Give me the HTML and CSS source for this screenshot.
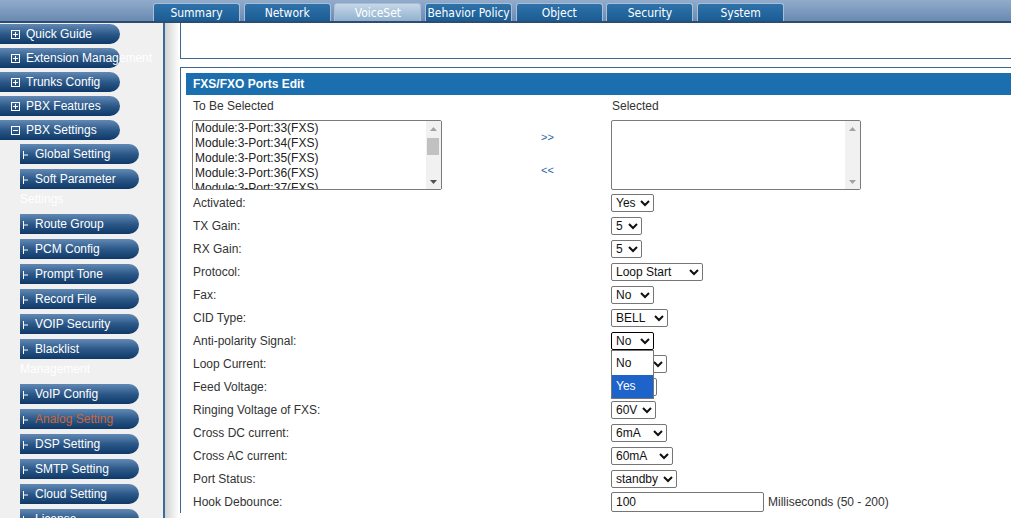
FILE: index.html
```html
<!DOCTYPE html>
<html lang="en">
<head>
    <meta charset="UTF-8">
    <meta name="viewport" content="width=device-width, initial-scale=1.0">
    <title>FXS/FXO Ports Edit</title>
    <link rel="stylesheet" href="styles.css">
</head>
<body>
    <div class="topbar">
        <ul class="tabs">
            <li class="tab">Summary</li>
            <li class="tab">Network</li>
            <li class="tab active">VoiceSet</li>
            <li class="tab">Behavior Policy</li>
            <li class="tab">Object</li>
            <li class="tab">Security</li>
            <li class="tab">System</li>
        </ul>
    </div>

    <div class="page">
        <div class="sidebar">
            <ul class="menu">
                <li class="menu-item">
                    <a class="menu-link"><svg class="box-icon" viewBox="0 0 9 9"><rect x="0.5" y="0.5" width="8" height="8" fill="none" stroke="#fff"/><path d="M2 4.5H7M4.5 2V7" stroke="#fff"/></svg>Quick Guide</a>
                </li>
                <li class="menu-item">
                    <a class="menu-link"><svg class="box-icon" viewBox="0 0 9 9"><rect x="0.5" y="0.5" width="8" height="8" fill="none" stroke="#fff"/><path d="M2 4.5H7M4.5 2V7" stroke="#fff"/></svg>Extension Management</a>
                </li>
                <li class="menu-item">
                    <a class="menu-link"><svg class="box-icon" viewBox="0 0 9 9"><rect x="0.5" y="0.5" width="8" height="8" fill="none" stroke="#fff"/><path d="M2 4.5H7M4.5 2V7" stroke="#fff"/></svg>Trunks Config</a>
                </li>
                <li class="menu-item">
                    <a class="menu-link"><svg class="box-icon" viewBox="0 0 9 9"><rect x="0.5" y="0.5" width="8" height="8" fill="none" stroke="#fff"/><path d="M2 4.5H7M4.5 2V7" stroke="#fff"/></svg>PBX Features</a>
                </li>
                <li class="menu-item">
                    <a class="menu-link"><svg class="box-icon" viewBox="0 0 9 9"><rect x="0.5" y="0.5" width="8" height="8" fill="none" stroke="#fff"/><path d="M2 4.5H7" stroke="#fff"/></svg>PBX Settings</a>
                    <ul class="submenu">
                        <li><a class="sub-link"><svg class="branch" viewBox="0 0 15 8"><path d="M3.5 0V8M3.5 4H8" stroke="#fff"/></svg>Global Setting</a></li>
                        <li><a class="sub-link"><svg class="branch" viewBox="0 0 15 8"><path d="M3.5 0V8M3.5 4H8" stroke="#fff"/></svg>Soft Parameter Settings</a></li>
                        <li><a class="sub-link"><svg class="branch" viewBox="0 0 15 8"><path d="M3.5 0V8M3.5 4H8" stroke="#fff"/></svg>Route Group</a></li>
                        <li><a class="sub-link"><svg class="branch" viewBox="0 0 15 8"><path d="M3.5 0V8M3.5 4H8" stroke="#fff"/></svg>PCM Config</a></li>
                        <li><a class="sub-link"><svg class="branch" viewBox="0 0 15 8"><path d="M3.5 0V8M3.5 4H8" stroke="#fff"/></svg>Prompt Tone</a></li>
                        <li><a class="sub-link"><svg class="branch" viewBox="0 0 15 8"><path d="M3.5 0V8M3.5 4H8" stroke="#fff"/></svg>Record File</a></li>
                        <li><a class="sub-link"><svg class="branch" viewBox="0 0 15 8"><path d="M3.5 0V8M3.5 4H8" stroke="#fff"/></svg>VOIP Security</a></li>
                        <li><a class="sub-link"><svg class="branch" viewBox="0 0 15 8"><path d="M3.5 0V8M3.5 4H8" stroke="#fff"/></svg>Blacklist Management</a></li>
                        <li><a class="sub-link"><svg class="branch" viewBox="0 0 15 8"><path d="M3.5 0V8M3.5 4H8" stroke="#fff"/></svg>VoIP Config</a></li>
                        <li><a class="sub-link current"><svg class="branch" viewBox="0 0 15 8"><path d="M3.5 0V8M3.5 4H8" stroke="#fff"/></svg>Analog Setting</a></li>
                        <li><a class="sub-link"><svg class="branch" viewBox="0 0 15 8"><path d="M3.5 0V8M3.5 4H8" stroke="#fff"/></svg>DSP Setting</a></li>
                        <li><a class="sub-link"><svg class="branch" viewBox="0 0 15 8"><path d="M3.5 0V8M3.5 4H8" stroke="#fff"/></svg>SMTP Setting</a></li>
                        <li><a class="sub-link"><svg class="branch" viewBox="0 0 15 8"><path d="M3.5 0V8M3.5 4H8" stroke="#fff"/></svg>Cloud Setting</a></li>
                        <li><a class="sub-link"><svg class="branch" viewBox="0 0 15 8"><path d="M3.5 0V8M3.5 4H8" stroke="#fff"/></svg>License</a></li>
                    </ul>
                </li>
            </ul>
        </div>
        <div class="shade"></div>

        <div class="main">
            <div class="top-box"></div>

            <div class="edit-box">
                <div class="box-title">FXS/FXO Ports Edit</div>

                <div class="picker">
                    <div class="pick-label">To Be Selected</div>
                    <div></div>
                    <div class="pick-label">Selected</div>

                    <div class="listbox">
                        <div class="options">
                            <div class="option">Module:3-Port:33(FXS)</div>
                            <div class="option">Module:3-Port:34(FXS)</div>
                            <div class="option">Module:3-Port:35(FXS)</div>
                            <div class="option">Module:3-Port:36(FXS)</div>
                            <div class="option">Module:3-Port:37(FXS)</div>
                        </div>
                        <div class="scrollbar">
                            <div class="sb-arrow"><svg width="7" height="4"><polygon points="0,4 3.5,0 7,4" fill="#a3a3a3"/></svg></div>
                            <div class="thumb"></div>
                            <div class="sb-space"></div>
                            <div class="sb-arrow"><svg width="7" height="4"><polygon points="0,0 7,0 3.5,4" fill="#505050"/></svg></div>
                        </div>
                    </div>
                    <div class="arrows">
                        <a class="move">&gt;&gt;</a>
                        <a class="move">&lt;&lt;</a>
                    </div>
                    <div class="listbox">
                        <div class="options"></div>
                        <div class="scrollbar">
                            <div class="sb-arrow"><svg width="7" height="4"><polygon points="0,4 3.5,0 7,4" fill="#a3a3a3"/></svg></div>
                            <div class="sb-space"></div>
                            <div class="sb-arrow"><svg width="7" height="4"><polygon points="0,0 7,0 3.5,4" fill="#a3a3a3"/></svg></div>
                        </div>
                    </div>
                </div>

                <div class="form">
                    <div class="row">
                        <div class="label">Activated:</div>
                        <div class="field"><select class="w43"><option>Yes</option><option>No</option></select></div>
                    </div>
                    <div class="row">
                        <div class="label">TX Gain:</div>
                        <div class="field"><select class="w31"><option>5</option></select></div>
                    </div>
                    <div class="row">
                        <div class="label">RX Gain:</div>
                        <div class="field"><select class="w31"><option>5</option></select></div>
                    </div>
                    <div class="row">
                        <div class="label">Protocol:</div>
                        <div class="field"><select class="w92"><option>Loop Start</option><option>Ground Start</option></select></div>
                    </div>
                    <div class="row">
                        <div class="label">Fax:</div>
                        <div class="field"><select class="w43"><option>No</option><option>Yes</option></select></div>
                    </div>
                    <div class="row">
                        <div class="label">CID Type:</div>
                        <div class="field"><select class="w57"><option>BELL</option><option>DTMF</option></select></div>
                    </div>
                    <div class="row">
                        <div class="label">Anti-polarity Signal:</div>
                        <div class="field">
                            <span class="drop">
                                <select class="w43 focused"><option>No</option><option>Yes</option></select>
                                <div class="popup">
                                    <div class="popup-option">No</div>
                                    <div class="popup-option selected">Yes</div>
                                </div>
                            </span>
                        </div>
                    </div>
                    <div class="row">
                        <div class="label">Loop Current:</div>
                        <div class="field"><select class="w56"><option>20mA</option></select></div>
                    </div>
                    <div class="row">
                        <div class="label">Feed Voltage:</div>
                        <div class="field"><select class="w46"><option>48V</option></select></div>
                    </div>
                    <div class="row">
                        <div class="label">Ringing Voltage of FXS:</div>
                        <div class="field"><select class="w45"><option>60V</option></select></div>
                    </div>
                    <div class="row">
                        <div class="label">Cross DC current:</div>
                        <div class="field"><select class="w56"><option>6mA</option></select></div>
                    </div>
                    <div class="row">
                        <div class="label">Cross AC current:</div>
                        <div class="field"><select class="w62"><option>60mA</option></select></div>
                    </div>
                    <div class="row">
                        <div class="label">Port Status:</div>
                        <div class="field"><select class="w66"><option>standby</option></select></div>
                    </div>
                    <div class="row">
                        <div class="label">Hook Debounce:</div>
                        <div class="field"><input class="text-input" type="text" value="100"><span class="unit">Milliseconds (50 - 200)</span></div>
                    </div>
                </div>
            </div>
        </div>
    </div>
</body>
</html>
```

FILE: styles.css
```css
body {
    margin: 0;
    width: 1011px;
    height: 518px;
    overflow: hidden;
    background: #fff;
    color: #333;
    font-family: "Liberation Sans", Arial, sans-serif;
    font-size: 12px;
}

/* top navigation */
.topbar {
    height: 21px;
    border-bottom: 2px solid #2d4c72;
    background: linear-gradient(#91abcb, #6a8ab2);
}

.tabs {
    list-style: none;
    margin: 0;
    padding: 3px 0 0 153px;
    display: flex;
    gap: 3.7px;
}

.tab {
    width: 85px;
    height: 17px;
    line-height: 18px;
    border: 1px solid #a9bfd6;
    border-bottom: none;
    border-radius: 3px 3px 0 0;
    background: linear-gradient(#2f72a9, #1a5d95);
    color: #fff;
    text-align: center;
    font-family: "DejaVu Sans Condensed", "DejaVu Sans", sans-serif;
    font-size: 12px;
}

.tab.active {
    background: linear-gradient(#c6d7e7, #8fb1cf);
}

.page {
    display: flex;
    height: 495px;
}

/* left menu */
.sidebar {
    flex: none;
    width: 163px;
    background: #f0f0f0;
    border-right: 2px solid #3c6a99;
}

.shade {
    flex: none;
    width: 13px;
    background: linear-gradient(to right, #d3d3d3, #fbfbfb);
}

.menu {
    list-style: none;
    margin: 0;
    padding: 1px 0 0;
}

.menu-item {
    margin-bottom: 4px;
}

.menu-link {
    display: block;
    width: 109px;
    height: 20px;
    line-height: 20px;
    padding-left: 11px;
    border-radius: 0 10px 10px 0;
    background: linear-gradient(#6289b5, #2c5989 50%, #0e3867);
    color: #fff;
    white-space: nowrap;
}

.box-icon {
    width: 9px;
    height: 9px;
    margin-right: 6px;
    vertical-align: -1px;
}

.submenu {
    list-style: none;
    margin: 4px 0 0 20px;
    padding: 0;
}

.submenu li {
    margin-bottom: 5px;
}

.sub-link {
    position: relative;
    z-index: 0;
    display: block;
    width: 119px;
    line-height: 20px;
    color: #fff;
}

.sub-link::before {
    content: "";
    position: absolute;
    z-index: -1;
    top: 0;
    left: 0;
    width: 100%;
    height: 20px;
    border-radius: 0 10px 10px 0;
    background: linear-gradient(#6289b5, #2c5989 50%, #0e3867);
}

.sub-link.current {
    color: #c9663e;
}

.branch {
    width: 15px;
    height: 8px;
    vertical-align: -1px;
}

/* content */
.main {
    flex: 1;
    min-width: 0;
    padding-left: 2px;
}

.top-box {
    height: 35px;
    border-left: 1px solid #3b6791;
    border-bottom: 1px solid #3b6791;
}

.edit-box {
    margin-top: 8px;
    padding: 5px 0 0 5px;
    border-left: 1px solid #3b6791;
    border-top: 1px solid #3b6791;
}

.box-title {
    height: 22px;
    line-height: 22px;
    padding-left: 7px;
    background: #1b6fae;
    color: #fff;
    font-weight: bold;
}

.picker {
    display: grid;
    grid-template-columns: 349px 70px 250px;
    row-gap: 6px;
    margin-top: 3px;
    padding-left: 6px;
}

.pick-label {
    line-height: 16px;
    padding-left: 1px;
}

.listbox {
    display: flex;
    width: 248px;
    height: 68px;
    border: 1px solid #7a7a7a;
    border-radius: 2px;
    overflow: hidden;
}

.options {
    flex: 1;
    padding-left: 2px;
    overflow: hidden;
}

.option {
    line-height: 15px;
    white-space: nowrap;
    color: #222;
}

.scrollbar {
    display: flex;
    flex-direction: column;
    width: 15px;
    background: #f1f1f1;
}

.sb-arrow {
    height: 15px;
    display: flex;
    align-items: center;
    justify-content: center;
}

.thumb {
    height: 17px;
    margin: 2px 2px 0 1px;
    background: #c1c1c1;
}

.sb-space {
    flex: 1;
}

.arrows {
    display: flex;
    flex-direction: column;
    align-items: flex-start;
    gap: 21px;
    padding-top: 11px;
    font-size: 11px;
    line-height: 12px;
}

.move {
    color: #2a64a3;
}

.form {
    margin-top: 1px;
    padding-left: 7px;
}

.row {
    display: flex;
    align-items: center;
    height: 23px;
}

.label {
    width: 418px;
}

.field {
    display: flex;
    align-items: center;
}

select {
    height: 18px;
    border: 1px solid #767676;
    border-radius: 2px;
    background: #fff;
    color: #111;
    font-family: inherit;
    font-size: 12px;
}

select.focused {
    border-color: #000;
}

.w31 { width: 31px; }
.w43 { width: 43px; }
.w45 { width: 45px; }
.w46 { width: 46px; }
.w56 { width: 56px; }
.w57 { width: 57px; }
.w62 { width: 62px; }
.w66 { width: 66px; }
.w92 { width: 92px; }

.drop {
    position: relative;
    display: inline-flex;
}

.popup {
    position: absolute;
    z-index: 5;
    top: 18px;
    left: 0;
    width: 41px;
    padding-top: 1px;
    border: 1px solid #767676;
    background: #fff;
    color: #111;
}

.popup-option {
    height: 23px;
    line-height: 23px;
    padding-left: 4px;
}

.popup-option.selected {
    background: #1e63c9;
    color: #fff;
}

.text-input {
    box-sizing: border-box;
    width: 153px;
    height: 20px;
    padding: 0 4px;
    border: 1px solid #767676;
    border-radius: 2px;
    color: #111;
    font-family: inherit;
    font-size: 12px;
}

.unit {
    margin-left: 4px;
}
```
